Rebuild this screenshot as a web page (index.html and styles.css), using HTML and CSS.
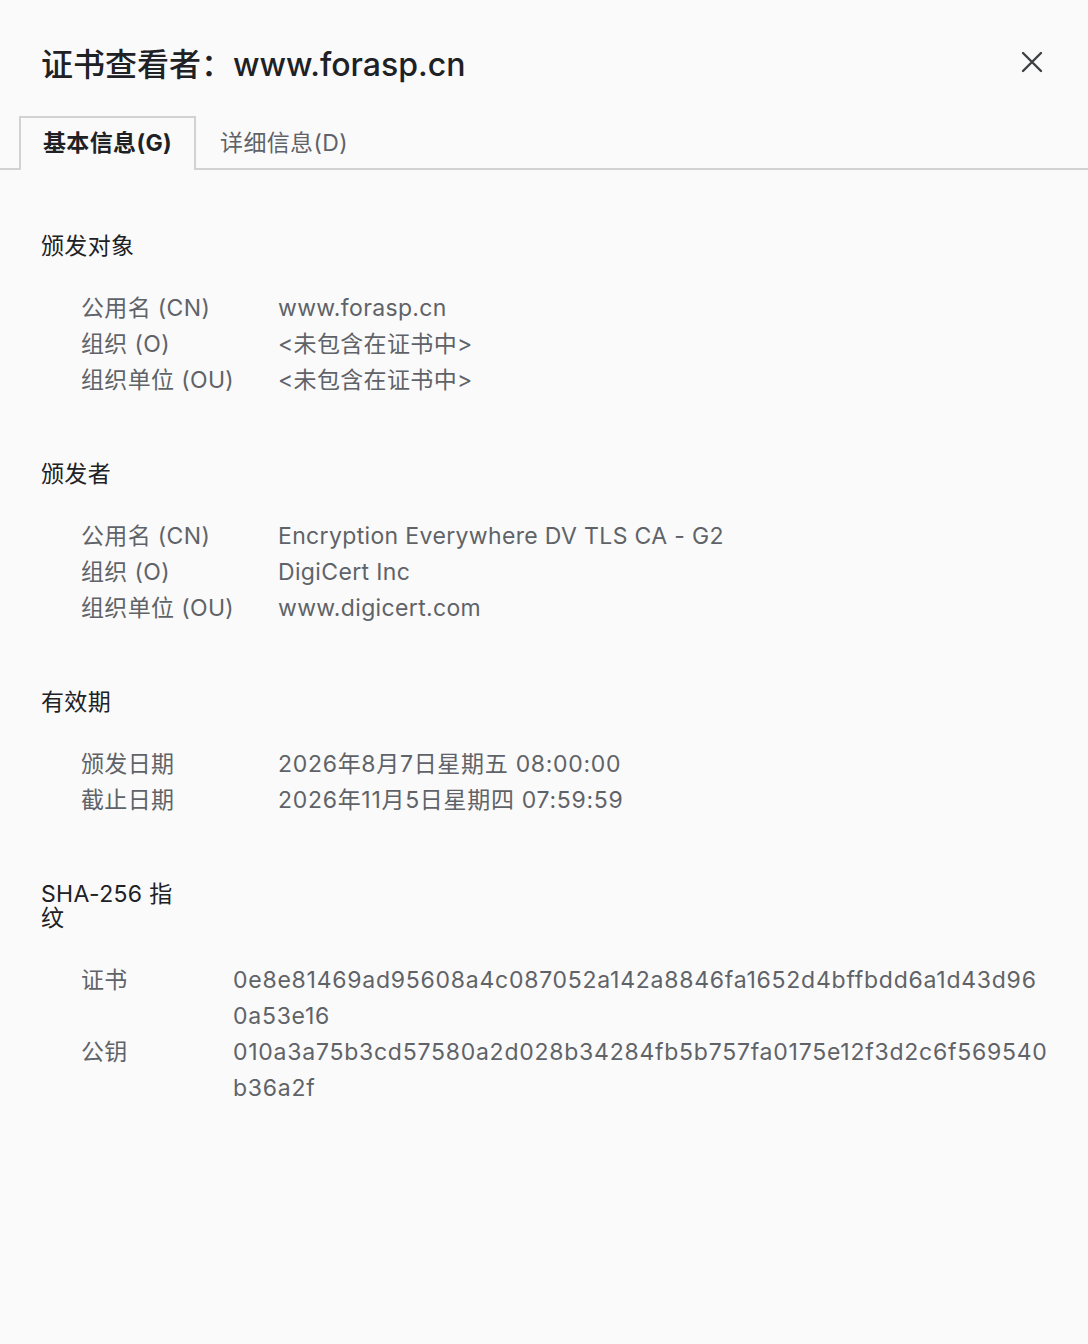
FILE: index.html
```html
<!DOCTYPE html>
<html lang="zh-CN">
<head>
<meta charset="utf-8">
<title>证书查看者：www.forasp.cn</title>
<link rel="stylesheet" href="styles.css">
</head>
<body>
<div class="dialog">
  <header class="head">
    <h1 class="title">证书查看者：www.forasp.cn</h1>
    <button class="close" aria-label="关闭">
      <svg width="24" height="24" viewBox="0 0 24 24"><path d="M3 3 L21 21 M21 3 L3 21" stroke="#3c4043" stroke-width="2.4" stroke-linecap="round" fill="none"/></svg>
    </button>
  </header>
  <nav class="tabs">
    <div class="tab active">基本信息(G)</div>
    <div class="tab">详细信息(D)</div>
  </nav>
  <main class="content">
    <section class="sec">
      <h2 class="sec-title">颁发对象</h2>
      <dl class="rows">
        <dt>公用名 (CN)</dt><dd>www.forasp.cn</dd>
        <dt>组织 (O)</dt><dd>&lt;未包含在证书中&gt;</dd>
        <dt>组织单位 (OU)</dt><dd>&lt;未包含在证书中&gt;</dd>
      </dl>
    </section>
    <section class="sec">
      <h2 class="sec-title">颁发者</h2>
      <dl class="rows">
        <dt>公用名 (CN)</dt><dd>Encryption Everywhere DV TLS CA - G2</dd>
        <dt>组织 (O)</dt><dd>DigiCert Inc</dd>
        <dt>组织单位 (OU)</dt><dd>www.digicert.com</dd>
      </dl>
    </section>
    <section class="sec">
      <h2 class="sec-title">有效期</h2>
      <dl class="rows">
        <dt>颁发日期</dt><dd class="num">2026年8月7日星期五 08:00:00</dd>
        <dt>截止日期</dt><dd class="num">2026年11月5日星期四 07:59:59</dd>
      </dl>
    </section>
    <section class="sec">
      <h2 class="sec-title narrow">SHA-256 指纹</h2>
      <dl class="rows short">
        <dt>证书</dt><dd class="hex">0e8e81469ad95608a4c087052a142a8846fa1652d4bffbdd6a1d43d960a53e16</dd>
        <dt>公钥</dt><dd class="hex">010a3a75b3cd57580a2d028b34284fb5b757fa0175e12f3d2c6f569540b36a2f</dd>
      </dl>
    </section>
  </main>
</div>
</body>
</html>
```
FILE: styles.css
```css
html, body {
  margin: 0;
  padding: 0;
  background: #fafafa;
}
body {
  font-family: Inter, "Noto Sans CJK SC", sans-serif;
  color: #202124;
  letter-spacing: 0.35px;
}
.dialog {
  width: 1088px;
  min-height: 1344px;
}
.head {
  display: flex;
  align-items: center;
  justify-content: space-between;
  padding: 45px 44px 0 41px;
}
.title {
  margin: 0;
  font-size: 32px;
  line-height: 40px;
  font-weight: 500;
  letter-spacing: 0;
  color: #202124;
}
.close {
  border: 0;
  background: transparent;
  padding: 0;
  width: 24px;
  height: 24px;
  display: flex;
  margin-top: -6px;
}
.tabs {
  display: flex;
  margin-top: 31px;
  padding-left: 19px;
  border-bottom: 2px solid #d2d2d2;
  height: 52px;
}
.tab {
  padding: 0 22px;
  font-size: 23px;
  line-height: 50px;
  color: #5f6368;
  border: 2px solid transparent;
  border-bottom: 0;
  margin-bottom: -2px;
}
.tab.active {
  color: #202124;
  font-weight: 700;
  border-color: #d2d2d2;
  background: #fafafa;
  height: 52px;
}
.content {
  padding: 64px 40px 0 41px;
}
.sec + .sec {
  margin-top: 64px;
}
.sec-title {
  margin: 0;
  font-size: 23px;
  line-height: 24px;
  font-weight: 400;
  color: #202124;
}
.sec-title.narrow {
  width: 150px;
}
.rows {
  display: grid;
  grid-template-columns: 197px 1fr;
  margin: 32px 0 0 40px;
  font-size: 23px;
  line-height: 36px;
  color: #5f6368;
}
.rows.short {
  grid-template-columns: 152px 1fr;
}
.rows dt, .rows dd {
  margin: 0;
}
.num {
  letter-spacing: 0.7px;
}
.hex {
  word-break: break-all;
  letter-spacing: 0.75px;
}
```
